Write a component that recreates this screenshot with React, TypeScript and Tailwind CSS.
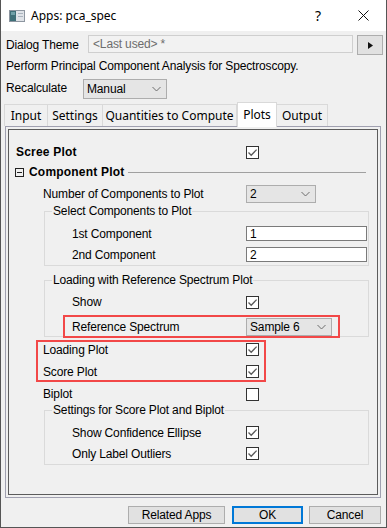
import React from 'react';

const gothic = "font-['Liberation_Sans',Arial,sans-serif] text-[12px] tracking-[-0.15px]";
const segoe = "font-['Noto_Sans','Liberation_Sans',sans-serif] text-[12px] text-black";

function Check({ on = true }: { on?: boolean }) {
  return (
    <span className="w-[13px] h-[13px] border border-[#333] bg-white flex items-center justify-center shrink-0">
      {on && (
        <svg width="11" height="11" viewBox="0 0 11 11">
          <path d="M1.5 5.5 L4.2 8.3 L9.6 2.6" fill="none" stroke="#5a5a5a" strokeWidth="1.3" />
        </svg>
      )}
    </span>
  );
}

function Chevron() {
  return (
    <svg width="9" height="6" viewBox="0 0 9 6">
      <path d="M0.5 1 L4.5 5 L8.5 1" fill="none" stroke="#6d6d6d" strokeWidth="1" />
    </svg>
  );
}

function Combo({ value, className }: { value: string; className: string }) {
  return (
    <div className={`bg-[#e5e5e5] border border-[#adadad] flex items-center justify-between pl-[3px] pr-[5px] shrink-0 ${className}`}>
      <span className={`${gothic} text-black`}>{value}</span>
      <Chevron />
    </div>
  );
}

function Field({ value }: { value: string }) {
  return (
    <div className="w-[121px] h-[15px] bg-white border border-[#7a7a7a] flex items-center pl-[3px]">
      <span className={`${gothic} text-black leading-none`}>{value}</span>
    </div>
  );
}

// label column + control; the control always starts at x=246
function Row({ label, children, className, labelW }: { label: string; children: React.ReactNode; className: string; labelW: string }) {
  return (
    <div className={`flex items-center ${className}`}>
      <span className={`${gothic} text-black shrink-0 ${labelW}`}>{label}</span>
      {children}
    </div>
  );
}

function Group({ title, children, className = '' }: { title: string; children: React.ReactNode; className?: string }) {
  return (
    <div className={`relative ml-[35px] w-[325px] border border-[#dadada] ${className}`}>
      <span className={`${gothic} text-black absolute -top-[8px] left-[7px] bg-[#f0f0f0] px-[1px] leading-[14px]`}>{title}</span>
      {children}
    </div>
  );
}

export default function App() {
  return (
    <div className="w-[387px] h-[528px] bg-[#f0f0f0] border-x border-b border-[#555] flex flex-col overflow-hidden">
      {/* title bar */}
      <div className="h-[31px] bg-white flex items-center shrink-0">
        <svg width="16" height="12" viewBox="0 0 16 12" className="ml-[8px]">
          <rect x="0.5" y="0.5" width="15" height="11" fill="#dfe3e8" stroke="#8d96a0" />
          <rect x="1" y="1" width="6" height="10" fill="#3e6f78" />
          <rect x="2" y="2" width="4" height="3" fill="#6fa0a8" />
          <rect x="9" y="3" width="5" height="1" fill="#aab4be" />
          <rect x="9" y="6" width="5" height="1" fill="#aab4be" />
        </svg>
        <span className={`${segoe} ml-[6px]`}>Apps: pca_spec</span>
        <span className={`${segoe} ml-auto text-[14px]`}>?</span>
        <svg width="11" height="11" viewBox="0 0 11 11" className="ml-[37px] mr-[17px]">
          <path d="M0.5 0.5 L10.5 10.5 M10.5 0.5 L0.5 10.5" stroke="#111" strokeWidth="1" />
        </svg>
      </div>

      {/* dialog theme */}
      <div className="flex items-start mt-[4px] h-[20px]">
        <span className={`${gothic} text-black w-[87px] pl-[5px] pt-[1px]`}>Dialog Theme</span>
        <div className="w-[265px] h-[18px] border border-[#cfcfcf] bg-[#f2f2f2] flex items-center pl-[4px]">
          <span className={`${gothic} text-[#6d6d6d]`}>&lt;Last used&gt; *</span>
        </div>
        <div className="ml-[4px] w-[26px] h-[20px] bg-[#e1e1e1] border border-[#adadad] flex items-center justify-center">
          <svg width="5" height="7" viewBox="0 0 5 7">
            <path d="M0 0 L5 3.5 L0 7 Z" fill="#111" />
          </svg>
        </div>
      </div>

      <div className={`${gothic} text-black pl-[5px] mt-[1px] h-[20px] flex items-center`}>
        Perform Principal Component Analysis for Spectroscopy.
      </div>

      <div className="flex items-start mt-[3px] h-[20px]">
        <span className={`${gothic} text-black w-[82px] pl-[5px]`}>Recalculate</span>
        <Combo value="Manual" className="w-[84px] h-[20px]" />
      </div>

      {/* tabs */}
      <div className="flex items-end pl-[3px] mt-[3px] h-[24px] relative z-10 shrink-0">
        <div className={`${segoe} w-[44px] h-[22px] border border-b-0 border-[#d9d9d9] flex items-center justify-center`}>Input</div>
        <div className={`${segoe} w-[55px] h-[22px] border border-l-0 border-b-0 border-[#d9d9d9] flex items-center justify-center`}>Settings</div>
        <div className={`${segoe} w-[134px] h-[22px] border border-l-0 border-b-0 border-[#d9d9d9] flex items-center justify-center`}>Quantities to Compute</div>
        <div className={`${segoe} w-[40px] h-[25px] -mb-[1px] bg-white border border-b-0 border-[#d9d9d9] flex items-center justify-center`}>Plots</div>
        <div className={`${segoe} w-[51px] h-[22px] border border-l-0 border-b-0 border-[#d9d9d9] flex items-center justify-center`}>Output</div>
      </div>

      {/* tab page */}
      <div className="ml-[4px] w-[376px] h-[372px] border border-[#a0a0b0] p-[2px] shrink-0">
        <div className="h-full border border-[#5c5c5c] flex flex-col">
          <div className="flex items-center h-[20px] mt-[12px] pl-[7px]">
            <span className={`${gothic} text-black font-bold tracking-[0.2px] w-[230px]`}>Scree Plot</span>
            <Check />
          </div>

          <div className="flex items-center h-[20px] pl-[6px]">
            <span className="w-[9px] h-[9px] border border-[#222] flex items-center justify-center">
              <span className="w-[5px] h-[1px] bg-[#222]" />
            </span>
            <span className={`${gothic} text-black font-bold tracking-[0.2px] ml-[5px]`}>Component Plot</span>
            <span className="flex-1 h-[1px] bg-[#a0a0a0] ml-[4px] mr-[11px]" />
          </div>

          <Row label="Number of Components to Plot" labelW="w-[203px]" className="h-[21px] mt-[1px] pl-[34px]">
            <Combo value="2" className="w-[70px] h-[18px]" />
          </Row>

          <Group title="Select Components to Plot" className="mt-[7px] pt-[11px]">
            <Row label="1st Component" labelW="w-[174px]" className="h-[21px] pl-[27px]">
              <Field value="1" />
            </Row>
            <Row label="2nd Component" labelW="w-[174px]" className="h-[21px] pl-[27px]">
              <Field value="2" />
            </Row>
          </Group>

          <Group title="Loading with Reference Spectrum Plot" className="mt-[14px] pt-[10px]">
            <Row label="Show" labelW="w-[174px]" className="h-[22px] pl-[27px]">
              <Check />
            </Row>
            <div className="relative z-10 ml-[18px] w-[277px] h-[23px] -mb-[2px] mt-[2px] border-2 border-[#f24848] flex items-center pl-[7px]">
              <span className={`${gothic} text-black w-[174px]`}>Reference Spectrum</span>
              <Combo value="Sample 6" className="w-[86px] h-[18px]" />
            </div>
          </Group>

          <div className="ml-[27px] mt-[3px] w-[230px] h-[42px] border-2 border-[#f24848] flex flex-col gap-[7px] pl-[5px]">
            <Row label="Loading Plot" labelW="w-[203px]" className="h-[15px]">
              <Check />
            </Row>
            <Row label="Score Plot" labelW="w-[203px]" className="h-[15px]">
              <Check />
            </Row>
          </div>

          <Row label="Biplot" labelW="w-[203px]" className="h-[22px] mt-[1px] pl-[34px]">
            <Check on={false} />
          </Row>

          <Group title="Settings for Score Plot and Biplot" className="mt-[5px] pt-[11px]">
            <Row label="Show Confidence Ellipse" labelW="w-[174px]" className="h-[21px] pl-[27px]">
              <Check />
            </Row>
            <Row label="Only Label Outliers" labelW="w-[174px]" className="h-[21px] pl-[27px]">
              <Check />
            </Row>
          </Group>
        </div>
      </div>

      {/* buttons */}
      <div className="flex justify-end mt-[8px] mr-[5px] gap-[7px]">
        <button className={`${gothic} text-black w-[97px] h-[18px] bg-[#e1e1e1] border border-[#adadad] leading-none`}>Related Apps</button>
        <button className={`${gothic} text-black w-[71px] h-[18px] bg-[#e1e1e1] border-2 border-[#0078d7] leading-none`}>OK</button>
        <button className={`${gothic} text-black w-[72px] h-[18px] bg-[#e1e1e1] border border-[#adadad] leading-none -ml-[1px]`}>Cancel</button>
      </div>
    </div>
  );
}
